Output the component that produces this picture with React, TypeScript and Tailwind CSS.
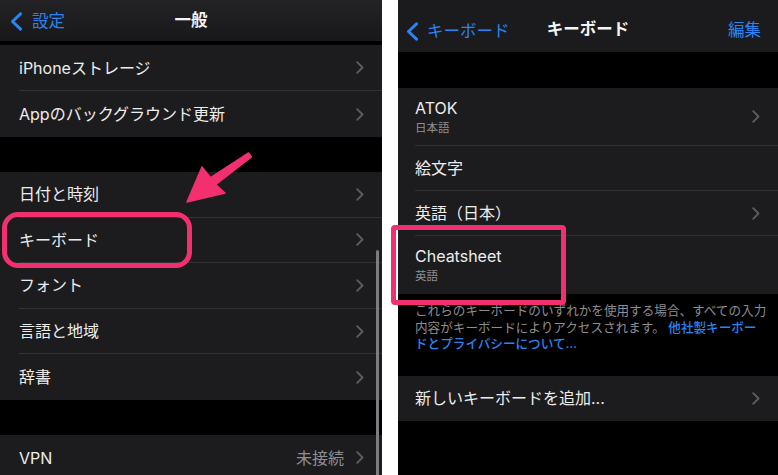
import type { ReactNode } from "react";

const FONT = { fontFamily: 'Inter, "Noto Sans CJK JP", "Noto Sans", sans-serif' };

const Chevron = () => (
  <svg width="8" height="13" viewBox="0 0 8 13" fill="none">
    <path d="M1.2 1.2L6.5 6.5L1.2 11.8" stroke="#5c5c61" strokeWidth="1.9" strokeLinecap="round" strokeLinejoin="round" />
  </svg>
);

const BackChevron = () => (
  <svg width="13" height="19" viewBox="0 0 13 19" fill="none">
    <path d="M10.5 1.8L2.5 9.5L10.5 17.2" stroke="#2a84f2" strokeWidth="3" strokeLinecap="round" strokeLinejoin="round" />
  </svg>
);

function Row({
  h,
  pl,
  last,
  chevron = true,
  value,
  children,
}: {
  h: string;
  pl: string;
  last?: boolean;
  chevron?: boolean;
  value?: string;
  children: ReactNode;
}) {
  return (
    <div className={`flex shrink-0 bg-[#1c1c1e] ${h} ${pl}`}>
      <div
        className={`flex flex-1 items-center justify-between pr-[18px] ${
          last ? "" : "border-b border-[#323234]"
        }`}
      >
        <div className="text-[16px] leading-[20px] text-[#ededed]">{children}</div>
        <div className="flex items-center gap-[12px]">
          {value && <span className="text-[16px] text-[#8e8e93]">{value}</span>}
          {chevron && <Chevron />}
        </div>
      </div>
    </div>
  );
}

function TwoLine({ title, sub }: { title: string; sub: string }) {
  return (
    <div className="flex flex-col">
      <span className="text-[16px] leading-[20px] text-[#ededed]">{title}</span>
      <span className="mt-[2px] text-[11.5px] leading-[16px] text-[#8e8e93]">{sub}</span>
    </div>
  );
}

function GeneralScreen() {
  return (
    <div className="relative flex h-[475px] w-[382px] shrink-0 flex-col overflow-hidden bg-black">
      <div className="relative flex h-[41px] shrink-0 items-center bg-gradient-to-b from-[#232325] to-[#18181a]">
        <div className="absolute left-[10px] top-[9px] flex items-center gap-[9px]">
          <BackChevron />
          <span className="text-[16.5px] text-[#2a84f2]">設定</span>
        </div>
        <span className="w-full text-center text-[16.5px] font-bold text-[#f4f4f4]">一般</span>
      </div>
      <div className="h-[4px] shrink-0" />
      <Row h="h-[46px]" pl="pl-[19px]">iPhoneストレージ</Row>
      <Row h="h-[46px]" pl="pl-[19px]" last>
        Appのバックグラウンド更新
      </Row>
      <div className="h-[35px] shrink-0" />
      <Row h="h-[45.6px]" pl="pl-[19px]">日付と時刻</Row>
      <Row h="h-[45.6px]" pl="pl-[19px]">キーボード</Row>
      <Row h="h-[45.6px]" pl="pl-[19px]">フォント</Row>
      <Row h="h-[45.6px]" pl="pl-[19px]">言語と地域</Row>
      <Row h="h-[45.6px]" pl="pl-[19px]" last>
        辞書
      </Row>
      <div className="h-[35px] shrink-0" />
      <Row h="h-[46px]" pl="pl-[19px]" last value="未接続">
        VPN
      </Row>
      <div className="absolute left-[376px] top-[250px] h-[240px] w-[3px] rounded-full bg-[#7c7c80]" />
    </div>
  );
}

function KeyboardScreen() {
  return (
    <div className="flex h-[475px] w-[380px] shrink-0 flex-col overflow-hidden bg-black">
      <div className="relative flex h-[52px] shrink-0 items-center bg-[#1b1b1d] pt-[6px]">
        <div className="absolute left-[8px] top-[19px] flex items-center gap-[8px]">
          <BackChevron />
          <span className="text-[16.5px] text-[#2a84f2]">キーボード</span>
        </div>
        <span className="w-full text-center text-[16.5px] font-bold text-[#f4f4f4]">キーボード</span>
        <span className="absolute right-[17px] top-[18px] text-[16.5px] text-[#2a84f2]">編集</span>
      </div>
      <div className="h-[36px] shrink-0" />
      <Row h="h-[58px]" pl="pl-[17px]">
        <TwoLine title="ATOK" sub="日本語" />
      </Row>
      <Row h="h-[45px]" pl="pl-[17px]" chevron={false}>
        絵文字
      </Row>
      <Row h="h-[45px]" pl="pl-[17px]">英語（日本）</Row>
      <Row h="h-[58px]" pl="pl-[17px]" last chevron={false}>
        <TwoLine title="Cheatsheet" sub="英語" />
      </Row>
      <div className="shrink-0 whitespace-nowrap pb-[23px] pl-[17px] pt-[9px] text-[12.6px] leading-[16.5px] text-[#8d8d92]">
        <div>これらのキーボードのいずれかを使用する場合、すべての入力</div>
        <div>
          内容がキーボードによりアクセスされます。{" "}
          <span className="font-medium text-[#2a84f2]">他社製キーボー</span>
        </div>
        <div className="font-medium text-[#2a84f2]">ドとプライバシーについて...</div>
      </div>
      <Row h="h-[45px]" pl="pl-[17px]" last>
        新しいキーボードを追加...
      </Row>
    </div>
  );
}

export default function App() {
  return (
    <div className="relative flex h-[475px] w-[778px] overflow-hidden bg-white" style={FONT}>
      <GeneralScreen />
      <div className="w-[16px] shrink-0" />
      <KeyboardScreen />

      {/* annotations */}
      <div className="absolute left-[2px] top-[212px] h-[56px] w-[190px] rounded-[16px] border-[5px] border-[#f2306f]" />
      <div className="absolute left-[391px] top-[225px] h-[80px] w-[175px] rounded-[4px] border-[5px] border-[#f2306f]" />
      <svg className="absolute left-0 top-0" width="778" height="475" viewBox="0 0 778 475">
        <polygon
          points="187,202 202,167 210.6,177.6 248.6,153 251.4,157 215.6,184.6 225,193"
          fill="#f2306f"
          strokeLinejoin="round"
          stroke="#f2306f"
          strokeWidth="1.5"
        />
      </svg>
    </div>
  );
}
